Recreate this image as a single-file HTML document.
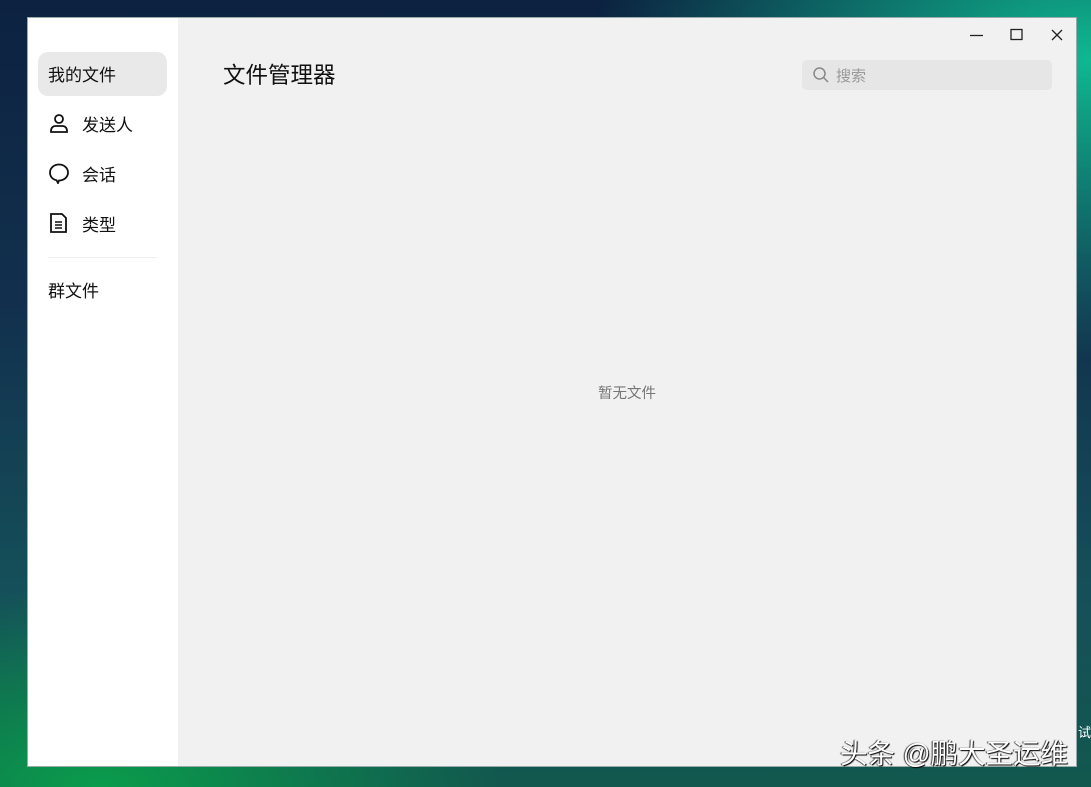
<!DOCTYPE html>
<html><head><meta charset="utf-8"><style>
*{margin:0;padding:0;box-sizing:border-box}
body{width:1091px;height:787px;overflow:hidden;position:relative;font-family:"Liberation Sans","Noto Sans CJK SC",sans-serif;
background:radial-gradient(ellipse 500px 300px at 1091px 60px,#0fb890 0%,rgba(15,140,120,0) 100%),radial-gradient(ellipse 400px 200px at 100px 787px,#0a9c4c 0%,rgba(10,120,70,0) 100%),linear-gradient(180deg,#0c2240 0%,#12314e 40%,#15505a 75%,#12584e 100%)}
.win{position:absolute;left:27px;top:17px;width:1050px;height:750px;background:#f1f1f1;border:1px solid #9aa;}
.side{position:absolute;left:0;top:0;width:150px;height:100%;background:#fff}
.item{position:absolute;left:10px;width:129px;height:44px;font-size:17px;color:#111;display:flex;align-items:center;padding-left:10px;padding-bottom:2px}
.item svg{margin-right:12px}
.sel{background:#e9e9e9;border-radius:10px}
h1{position:absolute;left:195px;top:40px;font-size:22.5px;font-weight:normal;color:#111}
.search{position:absolute;left:774px;top:42px;width:250px;height:30px;background:#e6e6e6;border-radius:5px;font-size:15px;color:#999;display:flex;align-items:center;padding-left:10px}
.empty{position:absolute;left:570px;top:364px;font-size:14.5px;color:#777}
.wm{position:absolute;left:840px;top:731px;font-size:27.5px;color:#fff;text-shadow:1px 1px 1px #000,-1px 0 1px #333}
</style></head><body>
<div class="win">
<div class="side">
<div class="item sel" style="top:34px">我的文件</div>
<div class="item" style="top:84px"><svg width="22" height="22" viewBox="0 0 22 22" fill="none" stroke="#111" stroke-width="1.8"><circle cx="11" cy="7" r="4"/><path d="M3 20v-1.5c0-2.5 2-4.5 4.5-4.5h7c2.5 0 4.5 2 4.5 4.5V20z"/></svg>发送人</div>
<div class="item" style="top:134px"><svg width="22" height="22" viewBox="0 0 22 22" fill="none" stroke="#111" stroke-width="1.8"><path d="M11 2.5c5 0 9 3.5 9 8s-4 8-9 8l-1 2.5-1.5-2.8C4.5 17.5 2 14.5 2 10.5c0-4.5 4-8 9-8z"/></svg>会话</div>
<div class="item" style="top:184px"><svg width="22" height="22" viewBox="0 0 22 22" fill="none" stroke="#111" stroke-width="1.8"><path d="M3 2h11l4 4v14H3z"/><path d="M7 10h7M7 13h7M7 16h7" stroke-width="1.4"/></svg>类型</div>
<div style="position:absolute;left:20px;top:239px;width:109px;height:1px;background:#eee"></div>
<div class="item" style="top:250px">群文件</div>
</div>
<h1>文件管理器</h1>
<svg style="position:absolute;left:942px;top:10px" width="14" height="14"><path d="M0 7.5h13" stroke="#222" stroke-width="1.3"/></svg>
<svg style="position:absolute;left:982px;top:10px" width="14" height="14"><rect x="1" y="1.5" width="11" height="10" fill="none" stroke="#222" stroke-width="1.3"/></svg>
<svg style="position:absolute;left:1022px;top:10px" width="14" height="14"><path d="M2 2l10 10M12 2L2 12" stroke="#222" stroke-width="1.3"/></svg>
<div class="search"><svg width="18" height="18" viewBox="0 0 18 18" fill="none" stroke="#888" stroke-width="1.5" style="margin-right:6px"><circle cx="7.5" cy="7.5" r="5.5"/><path d="M11.5 11.5l4.5 4.5"/></svg>搜索</div>
<div class="empty">暂无文件</div>
</div>
<div style="position:absolute;left:1078px;top:722px;font-size:13px;color:#fff">试</div>
<div class="wm">头条 @鹏大圣运维</div>
</body></html>
